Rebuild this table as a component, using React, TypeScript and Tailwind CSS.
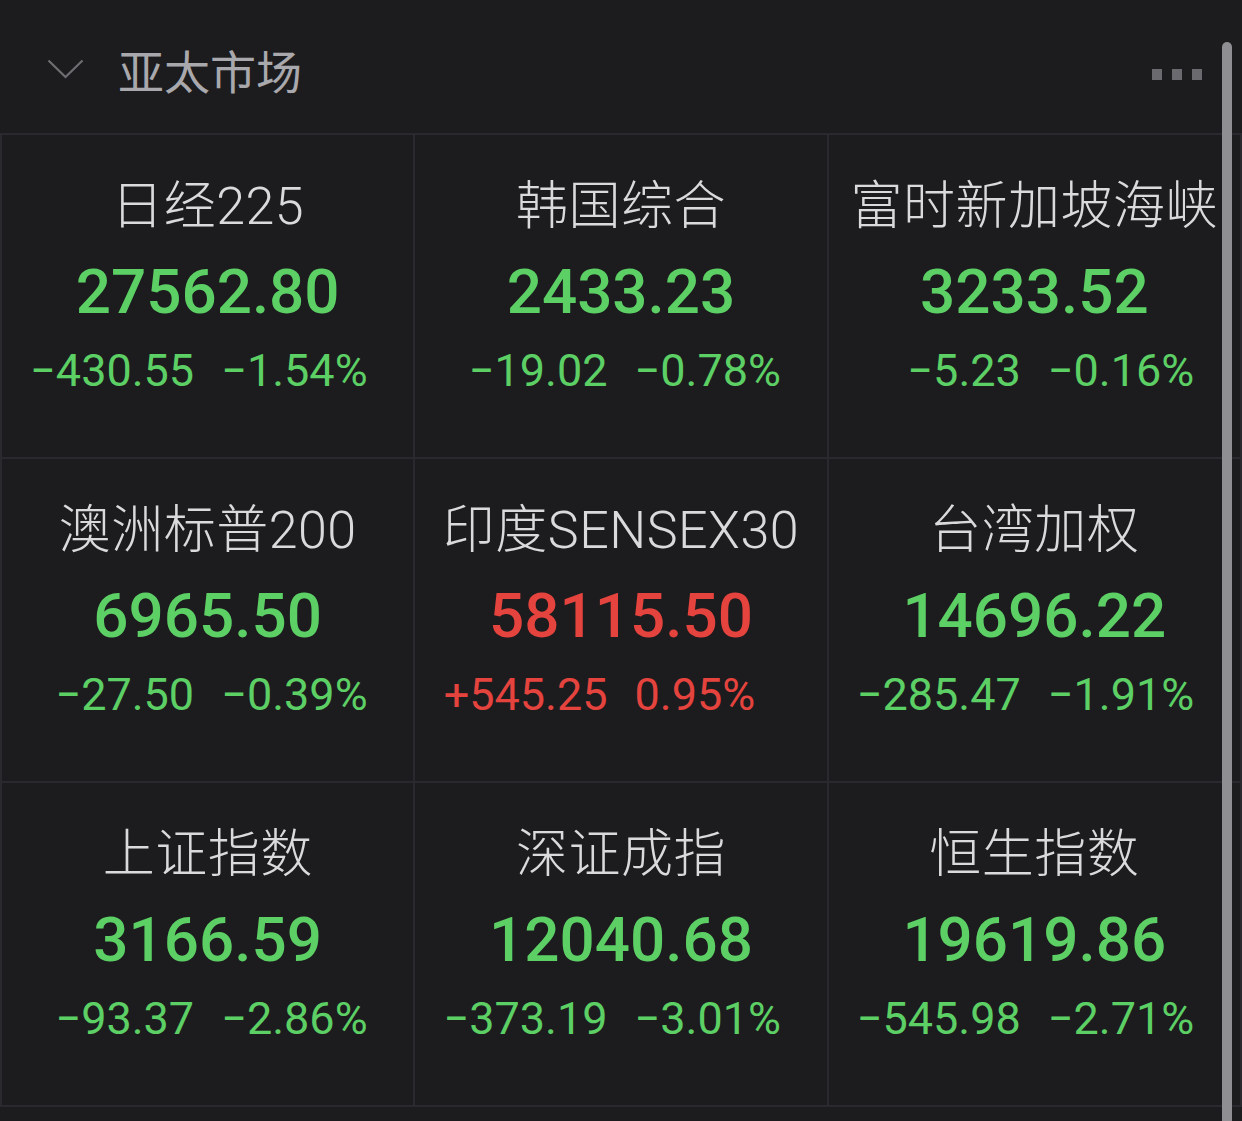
import React from "react";

type Quote = {
  name: string;
  price: string;
  change: string;
  pct: string;
  up?: boolean;
};

const quotes: Quote[] = [
  { name: "日经225", price: "27562.80", change: "−430.55", pct: "−1.54%" },
  { name: "韩国综合", price: "2433.23", change: "−19.02", pct: "−0.78%" },
  { name: "富时新加坡海峡", price: "3233.52", change: "−5.23", pct: "−0.16%" },
  { name: "澳洲标普200", price: "6965.50", change: "−27.50", pct: "−0.39%" },
  { name: "印度SENSEX30", price: "58115.50", change: "+545.25", pct: "0.95%", up: true },
  { name: "台湾加权", price: "14696.22", change: "−285.47", pct: "−1.91%" },
  { name: "上证指数", price: "3166.59", change: "−93.37", pct: "−2.86%" },
  { name: "深证成指", price: "12040.68", change: "−373.19", pct: "−3.01%" },
  { name: "恒生指数", price: "19619.86", change: "−545.98", pct: "−2.71%" },
];

const numFont = { fontFamily: 'Roboto, "Liberation Sans", sans-serif' };

function QuoteCell({ q }: { q: Quote }) {
  const color = q.up ? "text-[#e5433d]" : "text-[#5ccf65]";
  return (
    <div className="bg-[#1c1c1f] h-[322px] flex flex-col items-center pt-[42px]">
      <div
        className="h-[60px] leading-[60px] text-[52px] font-light tracking-[0.5px] text-[#dadadc] whitespace-nowrap"
        style={{ fontFamily: 'Roboto, "Noto Sans CJK SC", sans-serif' }}
      >
        {q.name}
      </div>
      <div
        className={`mt-[20px] h-[70px] leading-[70px] text-[62px] font-medium ${color}`}
        style={numFont}
      >
        {q.price}
      </div>
      <div
        className={`mt-[19px] h-[50px] leading-[50px] text-[45px] w-full flex gap-[26px] ${color}`}
        style={numFont}
      >
        <span className="flex-1 text-right pr-[1px]">{q.change}</span>
        <span className="flex-1 text-left">{q.pct}</span>
      </div>
    </div>
  );
}

export default function App() {
  return (
    <main className="relative w-[1242px] h-[1121px] overflow-hidden bg-[#1c1c1f]">
      {/* header */}
      <header className="h-[133px] flex items-center pl-[47px] pr-[40px]">
        <svg width="37" height="20" viewBox="0 0 37 20" className="mt-[4px]">
          <path d="M1.5 1.5 L18.5 18 L35.5 1.5" fill="none" stroke="#6e6e72" strokeWidth="2.2" />
        </svg>
        <h1
          className="ml-[34px] mt-[4px] text-[46px] leading-none text-[#a9a9ad]"
          style={{ fontFamily: '"Noto Sans CJK SC", sans-serif' }}
        >
          亚太市场
        </h1>
        <div className="ml-auto flex gap-[10px] mt-[16px]">
          <span className="w-[10px] h-[11px] bg-[#6b6b6f]" />
          <span className="w-[10px] h-[11px] bg-[#6b6b6f]" />
          <span className="w-[10px] h-[11px] bg-[#6b6b6f]" />
        </div>
      </header>

      {/* grid */}
      <section className="bg-[#2a2a2e] grid grid-cols-3 gap-[2px] p-[2px]">
        {quotes.map((q) => (
          <QuoteCell key={q.name} q={q} />
        ))}
      </section>

      {/* scrollbar */}
      <div className="absolute left-[1222px] top-[42px] w-[10px] h-[1100px] rounded-full bg-[#8f8f93]" />
    </main>
  );
}
